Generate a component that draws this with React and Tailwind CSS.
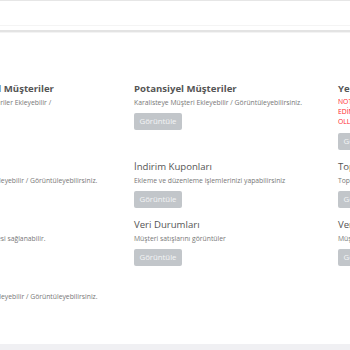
import React from "react";

const rows = [
  [
    { h: "Kayıtlı Bireysel Müşteriler", bold: true, d: ["Bireysel Listeye Müşteriler Ekleyebilir /", "Görüntüleyebilirsiniz."] },
    { h: "Potansiyel Müşteriler", bold: true, d: ["Karalisteye Müşteri Ekleyebilir / Görüntüleyebilirsiniz."] },
    { h: "Yeni Müşteriler", bold: true, red: ["NOT: BU ALANDA MÜŞTERİ", "EDİNİMİ İÇİN BAŞVURU", "OLLUŞTURABİLİRSİNİZ."] },
  ],
  [
    { h: "Gruplar", d: ["Müşteri Gruplarına Ekleyebilir / Görüntüleyebilirsiniz."] },
    { h: "İndirim Kuponları", d: ["Ekleme ve düzenleme işlemlerinizi yapabilirsiniz"] },
    { h: "Toplu Mesaj", d: ["Toplu mesaj gönderimi yapabilirsiniz"] },
  ],
  [
    { h: "Raporlar", d: ["Kayıtların düzenlenmesi sağlanabilir."] },
    { h: "Veri Durumları", d: ["Müşteri satışlarını görüntüler"] },
    { h: "Veri Aktarımı", d: ["Müşteri verilerini aktarır"] },
  ],
  [
    { h: "Adresler", d: ["Müşteri Adreslerini Ekleyebilir / Görüntüleyebilirsiniz."] },
    null,
    null,
  ],
];

function Cell({ c }) {
  if (!c) return <div />;
  return (
    <div className="flex flex-col items-start">
      <div
        className={
          "text-[9.6px] leading-[15px] whitespace-nowrap text-[#555] " +
          (c.bold ? "font-bold" : "font-normal")
        }
      >
        {c.h}
      </div>
      {c.red ? (
        <div className="mt-[1px] text-[6.8px] leading-[10px] text-[#ff1f2f] whitespace-nowrap">
          {c.red.map((l) => (
            <div key={l}>{l}</div>
          ))}
        </div>
      ) : (
        <div className="mt-[2px] text-[6.8px] leading-[10px] text-[#777] whitespace-nowrap">
          {c.d.map((l) => (
            <div key={l}>{l}</div>
          ))}
        </div>
      )}
      <button
        className={
          "h-[17px] w-[48px] rounded-[2px] bg-[#c2c6ca] text-[7.8px] text-[#f4f5f6] flex items-center justify-center " +
          (c.red ? "mt-[6px]" : "mt-[5px]")
        }
      >
        Görüntüle
      </button>
    </div>
  );
}

export default function App() {
  return (
    <div
      className="h-[350px] w-[350px] overflow-hidden bg-white flex flex-col"
      style={{ fontFamily: "'Open Sans', sans-serif" }}
    >
      <div className="border-t border-[#e6e6e6] h-[26px] border-b border-b-[#f4f4f4] bg-white" />
      <div className="h-[4px] bg-white" />
      <div className="h-[2px] bg-[#e3e3e3]" />
      <div className="h-[1px] bg-[#f3f3f3]" />
      <div className="flex-1 min-h-0 overflow-hidden">
        <div className="-ml-[70px] pt-[48px] grid grid-cols-[190px_190px_190px] gap-x-[14px] gap-y-[9px] w-[600px]">
          {rows.map((r, i) => r.map((c, j) => <Cell key={i + "-" + j} c={c} />))}
        </div>
      </div>
      <div className="h-[6px] shrink-0 bg-[#f0f0f3]" />
    </div>
  );
}
